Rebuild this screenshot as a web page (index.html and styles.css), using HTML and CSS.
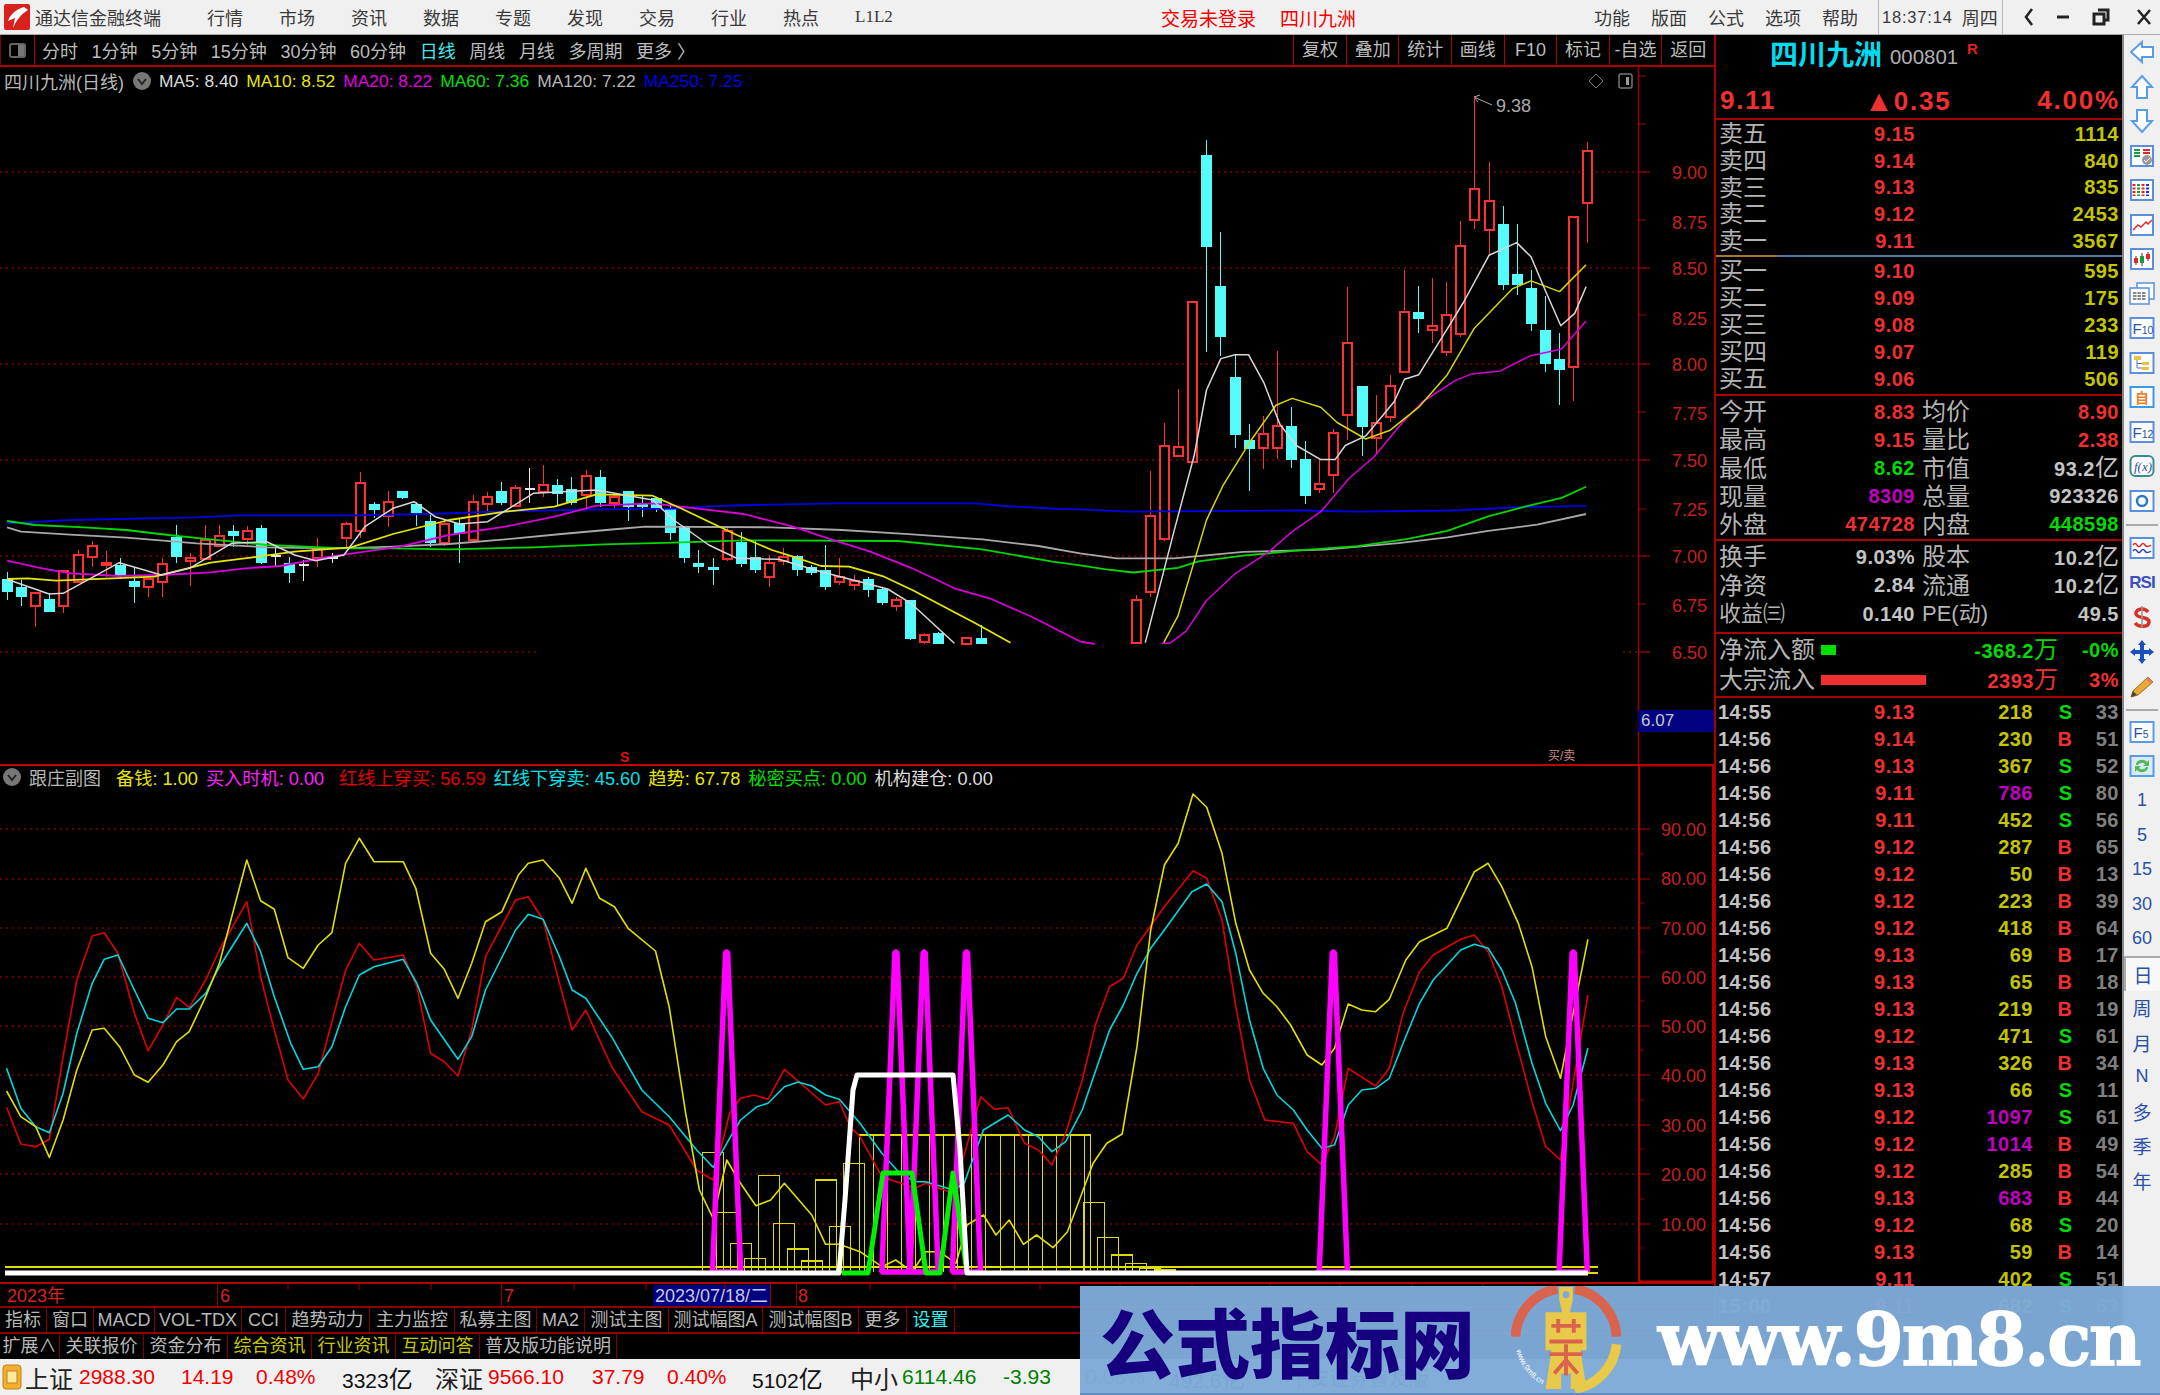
FILE: index.html
```html
<!DOCTYPE html>
<html lang="zh-CN">
<head>
<meta charset="utf-8">
<title>通达信金融终端</title>
<link rel="stylesheet" href="styles.css">
</head>
<body>
<div class="app">
  <header class="titlebar">
    <svg class="logo" viewBox="0 0 26 26"><rect width="26" height="26" rx="2" fill="#d8201c"/><path d="M20 3 C12 5 6 11 4 17 L11 14 L9 24 C12 17 17 10 24 6 Z" fill="#fff"/></svg>
    <span class="appname">通达信金融终端</span>
    <nav class="menu">
      <span>行情</span><span>市场</span><span>资讯</span><span>数据</span><span>专题</span><span>发现</span><span>交易</span><span>行业</span><span>热点</span><span class="l1">L1L2</span>
    </nav>
    <div class="notice"><span>交易未登录</span><span>四川九洲</span></div>
    <nav class="menu2"><span>功能</span><span>版面</span><span>公式</span><span>选项</span><span>帮助</span></nav>
    <div class="clock"><span class="time">18:37:14</span><span>周四</span></div>
    <div class="winctl">
      <svg viewBox="0 0 20 20" class="w1"><path d="M13 2 L7 10 L13 18" fill="none" stroke="#222" stroke-width="2.5"/></svg>
      <svg viewBox="0 0 20 20" class="w2"><path d="M4 10 H16" stroke="#222" stroke-width="3"/></svg>
      <svg viewBox="0 0 20 20" class="w3"><path d="M7 3 H17 V13 H13 M3 7 H13 V17 H3 Z" fill="none" stroke="#222" stroke-width="3"/></svg>
      <svg viewBox="0 0 20 20" class="w4"><path d="M4 3 L16 17 M16 3 L4 17" stroke="#222" stroke-width="2.5"/></svg>
    </div>
  </header>

  <div class="workspace">
    <section class="charts">
      <div class="toolbar">
        <div class="tb-icon"><i></i></div>
        <div class="periods">
          <span>分时</span><span>1分钟</span><span>5分钟</span><span>15分钟</span><span>30分钟</span><span>60分钟</span><span class="on">日线</span><span>周线</span><span>月线</span><span>多周期</span><span>更多 〉</span>
        </div>
        <div class="tools">
          <span>复权</span><span>叠加</span><span>统计</span><span>画线</span><span>F10</span><span>标记</span><span>-自选</span><span>返回</span>
        </div>
      </div>

      <div class="pane pane-main">
        <svg id="mainchart" class="chart" viewBox="0 67 1714 697" width="1714" height="697">
          <g class="axis-text">
            <text x="1672" y="179">9.00</text><text x="1672" y="229">8.75</text><text x="1672" y="275">8.50</text><text x="1672" y="325">8.25</text><text x="1672" y="371">8.00</text><text x="1672" y="420">7.75</text><text x="1672" y="467">7.50</text><text x="1672" y="516">7.25</text><text x="1672" y="563">7.00</text><text x="1672" y="612">6.75</text><text x="1672" y="659">6.50</text>
          </g>
          <text class="hi-label" x="1496" y="112">9.38</text>
          <path d="M1474 97 L1492 105 M1474 97 L1480 95 M1474 97 L1478 102" stroke="#aaa" fill="none"/>
          <path d="M1596 74 L1603 81 L1596 88 L1589 81 Z" fill="none" stroke="#777"/>
          <rect x="1619" y="74" width="13" height="14" rx="2" fill="none" stroke="#777" stroke-width="1.5"/><rect x="1626" y="77" width="3" height="8" fill="#999"/>
          <text class="sig" x="620" y="762">S</text>
          <text class="sig2" x="1548" y="760">买/卖</text>
        </svg>
        <div class="legend">
          <span class="l-name">四川九洲(日线)</span>
          <svg class="chev" viewBox="0 0 18 18"><circle cx="9" cy="9" r="9" fill="#777"/><path d="M5 7 L9 12 L13 7" fill="none" stroke="#222" stroke-width="2"/></svg>
          <span class="c-w">MA5: 8.40</span><span class="c-y">MA10: 8.52</span><span class="c-m">MA20: 8.22</span><span class="c-g">MA60: 7.36</span><span class="c-l">MA120: 7.22</span><span class="c-b">MA250: 7.25</span>
        </div>
        <div class="curprice">6.07</div>
      </div>

      <div class="pane pane-sub">
        <svg id="subchart" class="chart" viewBox="0 764 1714 518" width="1714" height="518">
          <path d="M0 765 H1714" stroke="#c40000" stroke-width="2"/>
          <rect x="1639" y="765.5" width="74" height="516" fill="none" stroke="#b80000" stroke-width="2"/>
          <g class="axis-text">
            <text x="1661" y="836">90.00</text><text x="1661" y="885">80.00</text><text x="1661" y="935">70.00</text><text x="1661" y="984">60.00</text><text x="1661" y="1033">50.00</text><text x="1661" y="1082">40.00</text><text x="1661" y="1132">30.00</text><text x="1661" y="1181">20.00</text><text x="1661" y="1231">10.00</text>
          </g>
        </svg>
        <div class="legend legend-sub">
          <svg class="chev" viewBox="0 0 18 18"><circle cx="9" cy="9" r="9" fill="#777"/><path d="M5 7 L9 12 L13 7" fill="none" stroke="#222" stroke-width="2"/></svg>
          <span class="l-name">跟庄副图</span>
          <span class="c-y">备钱: 1.00</span><span class="c-m2">买入时机: 0.00</span><span class="c-r">红线上穿买: 56.59</span><span class="c-c">红线下穿卖: 45.60</span><span class="c-y">趋势: 67.78</span><span class="c-g">秘密买点: 0.00</span><span class="c-w">机构建仓: 0.00</span>
        </div>
      </div>

      <svg class="dates" viewBox="0 1282 1714 24" width="1714" height="24">
        <rect x="653" y="1285" width="117" height="21" fill="#000080"/>
        <path d="M0 1283 H1714" stroke="#b80000" stroke-width="2"/>
        <path d="M217.500 1284 V1306 M501.500 1284 V1306 M796.500 1284 V1306 M770.500 1284 V1306 M288 1284 V1290 M359 1284 V1290 M431 1284 V1290 M574 1284 V1290 M646 1284 V1290 M725 1284 V1290 M870 1284 V1290 M955 1284 V1290 M1040 1284 V1290 M1120 1284 V1290 M1192 1284 V1290 M1270 1284 V1290 M1340 1284 V1290 M1412 1284 V1290 M1483 1284 V1290 M1555 1284 V1290" stroke="#900000"/>
        <text class="d-red" x="7" y="1302">2023年</text>
        <text class="d-red" x="220" y="1302">6</text>
        <text class="d-red" x="504" y="1302">7</text>
        <text class="d-cur" x="655" y="1302">2023/07/18/二</text>
        <text class="d-red" x="798" y="1302">8</text>
      </svg>

      <div class="btnrow r2">
        <span>指标</span><span>窗口</span><span>MACD</span><span>VOL-TDX</span><span>CCI</span><span>趋势动力</span><span>主力监控</span><span>私募主图</span><span>MA2</span><span>测试主图</span><span>测试幅图A</span><span>测试幅图B</span><span>更多</span><span class="cy">设置</span>
      </div>
      <div class="btnrow r3">
        <span>扩展∧</span><span>关联报价</span><span>资金分布</span><span class="ye">综合资讯</span><span class="ye">行业资讯</span><span class="ye">互动问答</span><span>普及版功能说明</span>
      </div>
    </section>

    <aside class="quote">
      <div class="q-name"><b>四川九洲</b><span class="code">000801</span><sup>R</sup></div>
      <div class="q-price"><span>9.11</span><span class="chg"><i>▲</i>0.35</span><span class="pct">4.00%</span></div>

      <div class="book sells">
        <div class="brow"><label>卖五</label><em class="up">9.15</em><em class="vol">1114</em></div>
        <div class="brow"><label>卖四</label><em class="up">9.14</em><em class="vol">840</em></div>
        <div class="brow"><label>卖三</label><em class="up">9.13</em><em class="vol">835</em></div>
        <div class="brow"><label>卖二</label><em class="up">9.12</em><em class="vol">2453</em></div>
        <div class="brow"><label>卖一</label><em class="up">9.11</em><em class="vol">3567</em></div>
      </div>
      <div class="book buys">
        <div class="brow"><label>买一</label><em class="up">9.10</em><em class="vol">595</em></div>
        <div class="brow"><label>买二</label><em class="up">9.09</em><em class="vol">175</em></div>
        <div class="brow"><label>买三</label><em class="up">9.08</em><em class="vol">233</em></div>
        <div class="brow"><label>买四</label><em class="up">9.07</em><em class="vol">119</em></div>
        <div class="brow"><label>买五</label><em class="up">9.06</em><em class="vol">506</em></div>
      </div>

      <div class="stats s1">
        <div class="srow"><label>今开</label><em class="up">8.83</em><label>均价</label><em class="up">8.90</em></div>
        <div class="srow"><label>最高</label><em class="up">9.15</em><label>量比</label><em class="up">2.38</em></div>
        <div class="srow"><label>最低</label><em class="dn">8.62</em><label>市值</label><em class="gy">93.2<u>亿</u></em></div>
        <div class="srow"><label>现量</label><em class="pu">8309</em><label>总量</label><em class="gy">923326</em></div>
        <div class="srow"><label>外盘</label><em class="up">474728</em><label>内盘</label><em class="dn">448598</em></div>
      </div>
      <div class="stats s2">
        <div class="srow"><label>换手</label><em class="gy">9.03%</em><label>股本</label><em class="gy">10.2<u>亿</u></em></div>
        <div class="srow"><label>净资</label><em class="gy">2.84</em><label>流通</label><em class="gy">10.2<u>亿</u></em></div>
        <div class="srow"><label class="sm">收益㈢</label><em class="gy">0.140</em><label class="sm">PE(动)</label><em class="gy">49.5</em></div>
      </div>

      <div class="flows">
        <div class="frow"><label>净流入额</label><div class="fbar"><i class="b-g"></i></div><em class="dn">-368.2<u>万</u></em><em class="dn">-0%</em></div>
        <div class="frow"><label>大宗流入</label><div class="fbar"><i class="b-r"></i></div><em class="up">2393<u>万</u></em><em class="up">3%</em></div>
      </div>

      <div class="ticks">
        <div class="trow"><b>14:55</b><em class="up">9.13</em><em class="vol">218</em><i class="dn">S</i><s>33</s></div>
        <div class="trow"><b>14:56</b><em class="up">9.14</em><em class="vol">230</em><i class="up">B</i><s>51</s></div>
        <div class="trow"><b>14:56</b><em class="up">9.13</em><em class="vol">367</em><i class="dn">S</i><s>52</s></div>
        <div class="trow"><b>14:56</b><em class="up">9.11</em><em class="pu">786</em><i class="dn">S</i><s>80</s></div>
        <div class="trow"><b>14:56</b><em class="up">9.11</em><em class="vol">452</em><i class="dn">S</i><s>56</s></div>
        <div class="trow"><b>14:56</b><em class="up">9.12</em><em class="vol">287</em><i class="up">B</i><s>65</s></div>
        <div class="trow"><b>14:56</b><em class="up">9.12</em><em class="vol">50</em><i class="up">B</i><s>13</s></div>
        <div class="trow"><b>14:56</b><em class="up">9.12</em><em class="vol">223</em><i class="up">B</i><s>39</s></div>
        <div class="trow"><b>14:56</b><em class="up">9.12</em><em class="vol">418</em><i class="up">B</i><s>64</s></div>
        <div class="trow"><b>14:56</b><em class="up">9.13</em><em class="vol">69</em><i class="up">B</i><s>17</s></div>
        <div class="trow"><b>14:56</b><em class="up">9.13</em><em class="vol">65</em><i class="up">B</i><s>18</s></div>
        <div class="trow"><b>14:56</b><em class="up">9.13</em><em class="vol">219</em><i class="up">B</i><s>19</s></div>
        <div class="trow"><b>14:56</b><em class="up">9.12</em><em class="vol">471</em><i class="dn">S</i><s>61</s></div>
        <div class="trow"><b>14:56</b><em class="up">9.13</em><em class="vol">326</em><i class="up">B</i><s>34</s></div>
        <div class="trow"><b>14:56</b><em class="up">9.13</em><em class="vol">66</em><i class="dn">S</i><s>11</s></div>
        <div class="trow"><b>14:56</b><em class="up">9.12</em><em class="pu">1097</em><i class="dn">S</i><s>61</s></div>
        <div class="trow"><b>14:56</b><em class="up">9.12</em><em class="pu">1014</em><i class="up">B</i><s>49</s></div>
        <div class="trow"><b>14:56</b><em class="up">9.12</em><em class="vol">285</em><i class="up">B</i><s>54</s></div>
        <div class="trow"><b>14:56</b><em class="up">9.13</em><em class="pu">683</em><i class="up">B</i><s>44</s></div>
        <div class="trow"><b>14:56</b><em class="up">9.12</em><em class="vol">68</em><i class="dn">S</i><s>20</s></div>
        <div class="trow"><b>14:56</b><em class="up">9.13</em><em class="vol">59</em><i class="up">B</i><s>14</s></div>
        <div class="trow"><b>14:57</b><em class="up">9.11</em><em class="vol">402</em><i class="dn">S</i><s>51</s></div>
        <div class="trow"><b>15:00</b><em class="up">9.11</em><em class="vol">682</em><i class="dn">S</i><s>63</s></div>
      </div>
    </aside>

    <aside class="sidebar">
      <div class="si"><svg viewBox="0 0 26 26"><path d="M2 13 L13 3 V8 H24 V18 H13 V23 Z" fill="#fff" stroke="#5a9be8" stroke-width="2"/></svg></div>
      <div class="si"><svg viewBox="0 0 26 26"><path d="M13 2 L23 13 H18 V24 H8 V13 H3 Z" fill="#fff" stroke="#5a9be8" stroke-width="2"/></svg></div>
      <div class="si"><svg viewBox="0 0 26 26"><path d="M13 24 L23 13 H18 V2 H8 V13 H3 Z" fill="#fff" stroke="#5a9be8" stroke-width="2"/></svg></div>
      <div class="si"><svg viewBox="0 0 26 26"><rect x="2" y="3" width="22" height="20" fill="#fff" stroke="#5a8fe0" stroke-width="2"/><path d="M5 7 H11 M5 10 H11 M5 13 H11" stroke="#1a9a3a" stroke-width="2"/><path d="M14 7 H21 M14 10 H21" stroke="#e02828" stroke-width="2"/><circle cx="18" cy="17" r="5" fill="#999"/><path d="M15 17 L17 19 L21 15" stroke="#fff" fill="none"/></svg></div>
      <div class="si"><svg viewBox="0 0 26 26"><rect x="2" y="3" width="22" height="20" fill="#fff" stroke="#5a8fe0" stroke-width="2"/><path d="M5 7 V19" stroke="#e02828" stroke-width="3" stroke-dasharray="2 1.500"/><path d="M9.500 7 V19" stroke="#1a9a3a" stroke-width="3" stroke-dasharray="2 1.500"/><path d="M14 7 V19" stroke="#e02828" stroke-width="3" stroke-dasharray="2 1.500"/><path d="M18.500 7 V19" stroke="#2030d0" stroke-width="3" stroke-dasharray="2 1.500"/></svg></div>
      <div class="si"><svg viewBox="0 0 26 26"><rect x="2" y="3" width="22" height="20" fill="#fff" stroke="#5a8fe0" stroke-width="2"/><path d="M4 18 L9 13 L12 15 L17 10 L19 12 L23 8" fill="none" stroke="#e02828" stroke-width="1.500"/></svg></div>
      <div class="si"><svg viewBox="0 0 26 26"><rect x="2" y="3" width="22" height="20" fill="#fff" stroke="#5a8fe0" stroke-width="2"/><path d="M7 10 V19 M13 7 V20 M19 6 V15" stroke="#333"/><rect x="5" y="12" width="4" height="5" fill="#e02828"/><rect x="11" y="10" width="4" height="7" fill="#1a9a3a"/><rect x="17" y="8" width="4" height="5" fill="#e02828"/></svg></div>
      <div class="si"><svg viewBox="0 0 26 26"><rect x="8" y="2" width="17" height="16" fill="#fff" stroke="#5a8fe0" stroke-width="1.500"/><rect x="1" y="7" width="19" height="16" fill="#fff" stroke="#5a8fe0" stroke-width="1.500"/><path d="M4 12 H17 M4 15 H17 M4 18 H17" stroke="#888" stroke-width="2" stroke-dasharray="3.500 1"/></svg></div>
      <div class="si"><svg viewBox="0 0 26 26"><rect x="1.500" y="3" width="23" height="20" fill="#fff" stroke="#5a8fe0" stroke-width="2"/><text class="ict" x="3.500" y="18.500">F<tspan class="icn">10</tspan></text></svg></div>
      <div class="si"><svg viewBox="0 0 26 26"><rect x="1.500" y="3" width="23" height="20" fill="#fff" stroke="#5a8fe0" stroke-width="2"/><rect x="5" y="6" width="7" height="4" fill="#f0c040"/><rect x="13" y="12" width="7" height="3" fill="#f0c040"/><rect x="13" y="17" width="7" height="3" fill="#f0c040"/><path d="M8 10 V18 H13 M8 13.500 H13" fill="none" stroke="#4a78c0"/></svg></div>
      <div class="si"><svg viewBox="0 0 26 26"><rect x="1.500" y="3" width="23" height="20" fill="#fff" stroke="#3a9ae8" stroke-width="2"/><text class="icj" x="6" y="19">自</text></svg></div>
      <div class="si"><svg viewBox="0 0 26 26"><rect x="1.500" y="3" width="23" height="20" fill="#fff" stroke="#5a8fe0" stroke-width="2"/><text class="ict" x="3.500" y="18.500">F<tspan class="icn">12</tspan></text></svg></div>
      <div class="si"><svg viewBox="0 0 26 26"><rect x="1.500" y="3" width="23" height="20" rx="5" fill="#fff" stroke="#3a8a90" stroke-width="2"/><text class="icf" x="5" y="18">f(x)</text></svg></div>
      <div class="si"><svg viewBox="0 0 26 26"><rect x="1.500" y="3" width="23" height="20" fill="#fff" stroke="#5a8fe0" stroke-width="2"/><circle cx="13" cy="13" r="5" fill="none" stroke="#2a78d0" stroke-width="2.500"/></svg></div>
      <div class="sep s-a"></div>
      <div class="si"><svg viewBox="0 0 26 26"><rect x="1.500" y="3" width="23" height="20" fill="#fff" stroke="#5a8fe0" stroke-width="2"/><path d="M4 10 Q6 7 8 10 T12 10 T16 10 T22 10" fill="none" stroke="#e02828" stroke-width="1.500"/><path d="M4 16 Q6 13 8 16 T12 16 T16 16 T22 16" fill="none" stroke="#3040d0" stroke-width="1.500"/></svg></div>
      <div class="si st rsi">RSI</div>
      <div class="si"><svg viewBox="0 0 26 26"><path d="M19 8 C15 3 6 5 7 10 C8 15 20 12 20 18 C20 23 10 24 6 19" fill="none" stroke="#d83028" stroke-width="3.500"/><path d="M13 2 V24" stroke="#999" stroke-width="1.500"/></svg></div>
      <div class="si"><svg viewBox="0 0 26 26"><path d="M13 1 L17 6 H15 V11 H20 V9 L25 13 L20 17 V15 H15 V20 H17 L13 25 L9 20 H11 V15 H6 V17 L1 13 L6 9 V11 H11 V6 H9 Z" fill="#1a4fc0"/></svg></div>
      <div class="si"><svg viewBox="0 0 26 26"><path d="M2 24 L4 18 L19 4 L24 9 L9 22 Z" fill="#e8a838" stroke="#a07020"/><path d="M19 4 L24 9 L22 11 L17 6 Z" fill="#e87868"/><path d="M2 24 L4 18 L8 22 Z" fill="#444"/></svg></div>
      <div class="sep s-b"></div>
      <div class="si"><svg viewBox="0 0 26 26"><rect x="1.500" y="3" width="23" height="20" fill="#fff" stroke="#5a9be8" stroke-width="2"/><text class="ict" x="4.500" y="18.500">F<tspan class="icn">5</tspan></text></svg></div>
      <div class="si"><svg viewBox="0 0 26 26"><rect x="1.500" y="3" width="23" height="20" fill="#d8ecf8" stroke="#5a9be8" stroke-width="2"/><path d="M7 12 A6 5 0 0 1 18 9 L20 7 V13 H14 L16 11 A4 3 0 0 0 9 12 Z M19 14 A6 5 0 0 1 8 17 L6 19 V13 H12 L10 15 A4 3 0 0 0 17 14 Z" fill="#58b858"/></svg></div>
      <div class="si st">1</div>
      <div class="si st">5</div>
      <div class="si st">15</div>
      <div class="si st">30</div>
      <div class="si st">60</div>
      <div class="si st cj pressed">日</div>
      <div class="si st cj">周</div>
      <div class="si st cj">月</div>
      <div class="si st">N</div>
      <div class="si st cj">多</div>
      <div class="si st cj">季</div>
      <div class="si st cj">年</div>
    </aside>
  </div>

  <footer class="status">
    <svg class="st-ic" viewBox="0 0 20 26"><rect x="1" y="1" width="18" height="24" rx="3" fill="#f0b030" stroke="#c88010"/><rect x="5" y="7" width="10" height="12" fill="#ffe9a0" stroke="#c88010"/></svg>
    <span class="cn">上证</span><span class="r">2988.30</span><span class="r">14.19</span><span class="r">0.48%</span><span class="k">3323<u>亿</u></span>
    <span class="cn">深证</span><span class="r">9566.10</span><span class="r">37.79</span><span class="r">0.40%</span><span class="k">5102<u>亿</u></span>
    <span class="cn">中小</span><span class="g">6114.46</span><span class="g">-3.93</span><span class="g">0.06%</span><span class="k">492.6<u>亿</u></span><span class="k broker">平安证券普及版</span>
  </footer>

  <div class="watermark">
    <span class="wm-cn">公式指标网</span>
    <svg class="wm-logo" viewBox="0 0 110 110">
      <defs><path id="arcL" d="M4 66 A52 52 0 0 0 44 106"/></defs>
      <path d="M3 52 A52 52 0 0 1 46 3 M64 3 A52 52 0 0 1 107 52" fill="none" stroke="#d9634c" stroke-width="10"/>
      <path d="M107 60 A52 52 0 0 1 64 106" fill="none" stroke="#e8c94a" stroke-width="10"/>
      <path d="M48 1 H62 V14 L59 27 H76 V66 H70 L76 106 H60 V90 H50 V106 H34 L40 66 H34 V27 H51 L48 14 Z" fill="#e8c94a"/>
      <circle cx="55" cy="9" r="3.500" fill="#7fa9d6"/>
      <path d="M40 41 H70 M47 34 V48 M63 34 V48 M38 57 H72 M38 70 H72 M55 60 V92 M43 90 L55 76 L67 90" fill="none" stroke="#d9634c" stroke-width="4"/>
      <text class="wm-arc"><textPath href="#arcL">www.9m8.cn</textPath></text>
    </svg>
    <span class="wm-url">www.9m8.cn</span>
  </div>
</div>
<script src="script.js"></script>
</body>
</html>
```
FILE: styles.css
```css
*{box-sizing:border-box}
html,body{margin:0;padding:0;background:#000}
body{width:2160px;height:1395px;overflow:hidden;font-family:"Liberation Sans","Noto Sans CJK SC",sans-serif}
em,i,b,s,u{font-style:normal;text-decoration:none}
.app{position:relative;width:2160px;height:1395px;display:flex;flex-direction:column;overflow:hidden}

.titlebar{height:35px;flex:none;background:#f0f0f0;border-bottom:1px solid #a8a8a8;display:flex;align-items:center;font-size:18px;color:#3a3a3a}
.logo{width:26px;height:26px;margin-left:4px;flex:none}
.appname{margin-left:5px}
.menu{display:flex;gap:36px;margin-left:46px;align-items:center}
.l1{font-family:"Liberation Serif",serif;font-size:17px;width:35px}
.notice{display:flex;gap:24px;margin-left:271px;color:#f00000;font-size:19px}
.menu2{display:flex;gap:21px;margin-left:238px}
.clock{display:flex;align-items:center;gap:9px;margin-left:20px;height:34px;padding:0 3px;border-left:1px solid #b8b8b8;border-right:1px solid #b8b8b8;width:125px}
.time{font-size:16.500px;letter-spacing:.8px;white-space:nowrap}
.winctl{position:relative;flex:1;height:34px}
.winctl svg{position:absolute;top:7px;width:20px;height:20px}
.w1{left:16px}.w2{left:50px}.w3{left:88px}.w4{left:131px}

.workspace{height:1324px;flex:none;display:flex;background:#000}
.charts{width:1714px;flex:none;display:flex;flex-direction:column}

.toolbar{height:32px;flex:none;display:flex;align-items:center;border-bottom:2px solid #a80000;color:#bcbcbc;font-size:18px}
.tb-icon{width:35px;height:30px;border-left:1px solid #800000;border-right:1px solid #a80000;display:flex;align-items:center;justify-content:center}
.tb-icon i{width:17px;height:15px;border:2px solid #666;border-radius:3px;background:linear-gradient(90deg,#000 0 55%,#777 55%)}
.periods{display:flex;gap:13.600px;margin-left:7px;white-space:nowrap}
.periods .on{color:#44e8f0}
.tools{display:flex;margin-left:auto;height:30px}
.tools span{width:52.600px;text-align:center;border-left:1px solid #a80000;line-height:30px;white-space:nowrap}

.pane{position:relative;flex:none}
.pane-main{height:697px}
.pane-sub{height:518px}
.chart{display:block;overflow:visible}
.axis-text text{font-size:18px;fill:#c42020}
.hi-label{font-size:18px;fill:#aaa}
.sig{font-size:14px;font-weight:700;fill:#e01010}
.sig2{font-size:12px;fill:#c88}

.legend{position:absolute;left:4px;top:4px;display:flex;align-items:center;height:20px;font-size:17.400px;white-space:nowrap;gap:8px}
.l-name{color:#b8b8b8;font-size:18px}
.legend .chev{width:18px;height:18px;margin-left:1px;margin-right:0}
.legend-sub{left:3px;top:3px;gap:8px;font-size:18.200px}
.legend-sub .chev{margin:0}
.legend-sub .l-name{margin-right:7px}
.legend-sub .c-m2{margin-right:7px}
.c-w{color:#dcdcdc}.c-y{color:#e6e600}.c-m{color:#e000e0}.c-m2{color:#ff20ff}.c-g{color:#00e000}.c-l{color:#b8b8b8}.c-b{color:#0000e8}.c-r{color:#e00000}.c-c{color:#00e0e8}
.curprice{position:absolute;left:1638px;top:643px;width:76px;height:22px;background:#000080;color:#c8c8c8;font-size:17px;line-height:22px;padding-left:3px}

.dates{display:block;flex:none}
.d-red{font-size:18px;fill:#d82020}
.d-cur{font-size:18px;fill:#c8c8e8}

.btnrow{display:flex;flex:none;color:#b8b8b8;font-size:18px;white-space:nowrap;border-top:2px solid #900000}
.btnrow span{border-right:1px solid #800000;padding:0 5px;text-align:center}
.r2{height:26px;line-height:24px}
.r3{height:27px;line-height:25px}
.r2 span:nth-child(1),.r2 span:nth-child(2){width:47px;padding:0}
.r2 span:nth-child(3){width:61px;padding:0}
.r2 span:nth-child(4){width:87px;padding:0}
.r2 span:nth-child(5){width:44px;padding:0}
.r2 span:nth-child(6){width:84px;padding:0}
.r2 span:nth-child(7){width:85px;padding:0}
.r2 span:nth-child(8){width:82px;padding:0}
.r2 span:nth-child(9){width:48px;padding:0}
.r2 span:nth-child(10){width:84px;padding:0}
.r2 span:nth-child(11){width:94px;padding:0}
.r2 span:nth-child(12){width:96px;padding:0}
.r2 span:nth-child(13){width:48px;padding:0}
.r2 span:nth-child(14){width:48px;padding:0}
.r3 span{width:84px;padding:0}
.r3 span:nth-child(1){width:60px}
.r3 span:nth-child(7){width:137px}
.cy{color:#30f0f0}
.ye{color:#c8c800}

.quote{width:408px;flex:none;border-left:2px solid #a80000;overflow:hidden;color:#b4b4b4;font-size:24px}
.quote label{font-weight:400;line-height:1}
.quote em,.ticks b{font-size:20px;font-weight:700;letter-spacing:.5px}
.quote u{font-size:24px;font-weight:400;letter-spacing:0;line-height:1}
.up{color:#f03030}.dn{color:#00dc00}.gy{color:#c4c4c4}.pu{color:#c000c0}.vol{color:#c4c400}

.q-name{height:47px;display:flex;align-items:flex-start;padding:5px 0 0 54px}
.q-name b{font-size:28px;font-weight:700;color:#00dcf0;line-height:32px}
.code{font-size:20.400px;color:#b0b0b0;margin:6px 0 0 8px}
.q-name sup{font-size:15px;color:#e02020;font-weight:700;margin:1px 0 0 9px;line-height:1}
.q-price{height:38px;display:grid;grid-template-columns:144px 1fr auto;border-bottom:2px solid #a80000;color:#f03030;font-size:26px;font-weight:700;letter-spacing:1.800px;padding:2px 2px 0 4px;line-height:32px}
.chg{display:flex;align-items:center}
.chg i{font-size:30px;line-height:30px;letter-spacing:0}

.book{display:flex;flex-direction:column}
.sells{height:137px;padding-top:1px;border-bottom:2px solid transparent;border-image:linear-gradient(90deg,#a87830 0 62px,#4a7aa8 62px) 1}
.buys{height:139px;padding-top:1px;border-bottom:2px solid #a80000}
.brow{height:27px;display:grid;grid-template-columns:196px 204px;position:relative;align-items:center;padding-left:3px}
.brow label{position:absolute;left:3px;top:1px}
.brow em{text-align:right;grid-column:1}
.brow em.vol{grid-column:2;grid-row:1}

.stats{display:flex;flex-direction:column}
.s1{height:145px;padding-top:2px;border-bottom:2px solid #a80000}
.s2{height:93px;padding-top:2px;border-bottom:2px solid #a80000}
.srow{height:28.500px;display:grid;align-items:center;padding:0 3px;grid-template-columns:50px 146px 58px 146px}
.srow label{white-space:nowrap}
.srow label:nth-of-type(2){padding-left:7px}
.srow em{text-align:right;white-space:nowrap}
.srow .sm{font-size:22px;width:0}

.flows{height:64px;padding-top:1px;border-bottom:2px solid #a80000}
.frow{height:30px;display:grid;grid-template-columns:102px 137px 100px 61px;align-items:center;padding-left:3px}
.frow em{text-align:right;white-space:nowrap}
.fbar{height:10px;display:block}
.fbar i{display:block;height:10px}
.b-g{width:15px;background:#00e000}
.b-r{width:105px;background:#f03030}

.ticks{padding-top:1px}
.trow{height:27px;display:grid;grid-template-columns:60px 137px 118px 39px 47px;align-items:center;padding-left:2px;line-height:27px}
.trow b{color:#c4c4c4}
.trow em{text-align:right}
.trow i{font-size:20px;font-weight:700;text-align:right}
.trow s{font-size:20px;font-weight:700;letter-spacing:.5px;color:#808080;text-align:right;text-decoration:none}

.sidebar{width:38px;flex:none;background:#f0f0f0;border-left:2px solid #888;display:flex;flex-direction:column;color:#2a50a8}
.si{height:34.500px;flex:none;display:flex;align-items:center;justify-content:center}
.si svg{width:26px;height:26px;display:block}
.st{font-size:18px}
.cj{font-size:19px}
.rsi{font-weight:700;font-size:17px;color:#3a50c0;letter-spacing:-1px}
.pressed{background:#f8f8f8;border-top:2px solid #aaa;border-left:2px solid #aaa}
.sep{flex:none;border-top:2px solid #aaa}
.s-a{margin:6px 2px 0;height:7px}
.s-b{height:6px;margin:5px 2px 0}
.ict{font-size:15px;fill:#2a50b0}
.icn{font-size:10.500px}
.icj{font-size:14px;fill:#f08030;font-weight:700}
.icf{font-size:13px;fill:#2a50a0;font-style:italic;font-family:"Liberation Serif",serif}

.status{flex:1;background:#f0f0f0;display:grid;align-items:center;grid-template-columns:25px 54px 102px 75px 86px 93px 53px 104px 75px 85px 98px 52px 101px 82px 84px 120px 1fr;font-size:21px;white-space:nowrap}
.st-ic{width:20px;height:26px;margin-left:2px}
.status .cn{font-size:24px;color:#222}
.status .r{color:#f00000}
.status .g{color:#008000}
.status .k{color:#111}
.status u{font-size:24px}
.broker{font-size:20px}

.watermark{position:absolute;left:1080px;top:1286px;width:1080px;height:109px;background:rgba(127,170,216,.97);border-bottom:2px solid #5f8ebf;display:flex;align-items:center}
.wm-cn{font-family:"Noto Sans CJK SC",sans-serif;font-weight:900;font-size:75px;line-height:1;color:#16007f;margin-left:20px;width:378px;white-space:nowrap}
.wm-logo{width:110px;height:107px;margin-left:33px;flex:none}
.wm-url{font-family:"DejaVu Serif",serif;font-weight:700;font-size:72px;line-height:1;color:#fff;margin-left:37px;white-space:nowrap;letter-spacing:-2px;-webkit-text-stroke:1.500px #fff}
.wm-arc{font-size:8px;fill:#fff;font-family:"Liberation Sans",sans-serif}
```
FILE: script.js
```js
(function(){
var NS='http://www.w3.org/2000/svg';
function el(p,n,a){var e=document.createElementNS(NS,n);for(var k in a)e.setAttribute(k,a[k]);p.appendChild(e);return e}
function z7(a){return a.map(function(p){return[p[0]/1.425,440+p[1]/3]})}
function z8(a){return a.map(function(p){return[1080+p[0]/2.45,80+p[1]/2.613]})}
function z9(a){return a.map(function(p){return[p[0]/1.823,780+p[1]/3]})}
function z10(a){return a.map(function(p){return[860+p[0]/1.823,780+p[1]/3]})}
function line(p,pts,c,w,extra){var a={points:pts.map(function(q){return q[0].toFixed(1)+','+q[1].toFixed(1)}).join(' '),fill:'none',stroke:c,'stroke-width':w,'stroke-linejoin':'round'};for(var k in extra)a[k]=extra[k];return el(p,'polyline',a)}
var STEP=14.11;function cx(i){return 7+STEP*i}
var DOT='#c00000';

/* ---------- main chart ---------- */
var m=document.getElementById('mainchart');
var g=el(m,'g',{});
el(g,'path',{d:'M1638.500 67 V764',stroke:'#a00000','stroke-width':1.5});
[172,268,364,460,556].forEach(function(y){el(g,'path',{d:'M0 '+y+' H1650',stroke:DOT,'stroke-dasharray':'2 4'})});
el(g,'path',{d:'M0 652 H537 M1623 652 H1650',stroke:DOT,'stroke-dasharray':'2 4'});
[220,315,412,509,604,124,76].forEach(function(y){el(g,'path',{d:'M1639 '+y+' H1646',stroke:'#9a0000'})});
[172,268,364,460,556,652].forEach(function(y){el(g,'path',{d:'M1639 '+y+' H1650',stroke:'#b00000'})});

var A=[['c',395,418,455,480],['c',420,440,472,498],['r',458,458,498,562],['c',460,476,517,517],['r',390,392,498,520],['r',330,346,425,430],['r',302,318,352,382],['r',332,368,376,410],['c',355,376,408,415],['c',380,422,440,490],['r',405,418,440,472],['r',355,373,426,472],['c',255,290,350,368],['r',340,355,363,437],['r',255,300,358,360],['r',255,288,318,322],['c',255,272,288,320],['r',258,273,297,315],['c',255,265,368,372],['w',320,345,349,378],['c',352,368,400,430],['w',360,372,376,422],['r',295,327,354,380],['w',340,350,352,370],['r',245,252,295,320],['r',95,130,272,295],['c',185,192,210,235],['r',152,185,228,262],['c',152,152,175,178],['c',185,192,220,258],['c',225,242,310,320],['r',240,252,310,318],['c',235,250,283,368],['r',165,185,300,302],['r',155,172,192,218],['c',125,152,188,195],['r',135,145,198,200],['w',85,144,147,190],['r',75,135,155,170],['c',118,134,163,198],['c',110,148,190,195],['r',90,108,165,210],['c',90,112,188,200],['r',158,172,190,205],['c',152,152,202,242],['c',165,188,200,230],['c',170,175,205,215],['c',190,205,278,300],['c',258,258,355,370],['c',330,368,382,400],['c',355,382,390,435],['r',265,273,358,362],['c',275,305,372,382],['c',300,350,390,400],['r',345,370,412,440],['r',325,350,362,375],['c',345,347,390,408],['c',375,380,400,405],['c',315,390,440,450],['r',355,412,426,435],['r',405,422,436,450],['c',410,418,450,470],['c',445,447,490,495],['r',470,480,497,512],['c',480,480,597,600],['r',578,586,606,612],['c',577,580,612,612],['c',612,612,612,612],['r',590,594,612,612],['c',555,593,612,612],['c',562,612,612,612]];
var B=[['r',1345,1360,1471,1471],['r',1022,1140,1338,1352],['r',897,957,1200,1205],['r',807,960,982,982],['r',580,580,997,997],['c',158,195,437,712],['c',398,537,672,720],['c',715,776,928,962],['c',900,940,963,1073],['r',878,926,962,1017],['r',708,903,962,990],['c',855,905,994,1013],['c',943,990,1088,1108],['r',990,1055,1068,1080],['r',912,922,1032,1080],['r',540,686,875,940],['c',800,800,907,983],['r',822,895,935,978],['r',772,800,880,893],['r',497,607,762,762],['c',537,607,625,660],['r',517,643,652,688],['r',528,615,710,722],['r',368,435,664,672],['r',45,286,365,390],['r',215,317,393,460],['c',328,375,536,548],['c',375,508,536,563],['c',497,544,637,657],['c',565,654,743,763],['c',662,729,758,850],['r',357,357,750,840],['r',163,185,322,425]];
function candle(i,d,f){
  var x=Math.round(cx(i))+.5,t=d[0],wt=f(d[1]),bt=f(d[2]),bb=f(d[3]),wb=f(d[4]);
  var c=t==='c'?'#54fcfc':(t==='r'?'#ff3030':'#e8e8e8');
  var cg=el(g,'g',{'shape-rendering':'crispEdges'});
  el(cg,'path',{d:'M'+x+' '+wt+' V'+wb,stroke:c,'stroke-width':t==='w'?1:1.5});
  if(t==='c')el(cg,'rect',{x:x-5.5,y:bt,width:11,height:Math.max(bb-bt,1),fill:c});
  else if(t==='r')el(cg,'rect',{x:x-4.5,y:bt,width:9,height:Math.max(bb-bt,2),fill:'#000',stroke:c,'stroke-width':2});
  else el(cg,'rect',{x:x-5,y:bt,width:10,height:2,fill:c});
}
A.forEach(function(d,i){if(d[2]<612)candle(i,d,function(v){return 440+v/3})});
B.forEach(function(d,i){candle(80+i,d,function(v){return 80+v/2.613})});

function ma(ptsA,ptsB,c,w){var a=z7(ptsA).filter(function(q){return q[0]<1080});line(g,a.concat(z8(ptsB)),c,w)}
ma([[10,250],[100,240],[280,232],[340,226],[510,226],[610,222],[720,214],[860,208],[960,206],[1010,199],[1070,195],[1190,190],[1390,190],[1430,198],[1510,207]],[[0,1122],[120,1128],[540,1125],[680,1128],[910,1125],[1080,1116],[1240,1113]],'#0000e8',1.8);
ma([[10,262],[30,275],[100,284],[180,293],[280,310],[380,322],[480,325],[560,320],[640,312],[720,298],[800,282],[880,267],[920,260],[1100,262],[1200,270],[1300,283],[1400,298],[1480,318]],[[0,1237],[90,1250],[230,1250],[400,1233],[600,1227],[780,1210],[900,1195],[1000,1178],[1120,1162],[1240,1134]],'#a8a8a8',1.8);
ma([[10,243],[50,255],[120,262],[180,270],[240,285],[300,298],[380,315],[490,325],[560,325],[640,328],[760,322],[860,313],[960,308],[1060,301],[1280,303],[1400,328],[1500,365]],[[0,1268],[60,1278],[130,1287],[240,1275],[290,1258],[400,1243],[530,1230],[680,1218],[800,1200],[900,1178],[1000,1140],[1090,1115],[1180,1092],[1240,1063]],'#00d800',1.8);
line(g,z7([[10,362],[60,385],[100,400],[170,408],[230,405],[300,397],[350,385],[400,378],[470,350],[570,320],[640,285],[720,260],[790,230],[850,197],[930,190],[1060,222],[1130,260],[1180,295],[1240,335],[1300,385],[1360,445],[1410,475],[1470,530],[1540,605],[1560,612]]),'#d800d8',1.8);
line(g,z8([[200,1472],[220,1472],[260,1440],[310,1360],[380,1290],[460,1235],[520,1180],[590,1128],[660,1040],[720,985],[790,895],[840,840],[920,785],[960,768],[1030,760],[1100,722],[1180,703],[1240,630]]),'#d800d8',1.5);
line(g,z7([[10,417],[40,415],[80,422],[160,415],[220,410],[300,368],[360,352],[420,335],[500,322],[560,282],[640,240],[720,215],[790,200],[850,163],[930,167],[970,205],[1050,285],[1100,330],[1130,350],[1170,378],[1210,380],[1260,410],[1300,450],[1390,550],[1440,608]]),'#e6e600',1.8);
line(g,z8([[205,1470],[240,1400],[310,1150],[350,1060],[420,940],[480,850],[520,832],[590,855],[630,895],[700,938],[760,915],[830,855],[900,770],[965,650],[1060,545],[1105,525],[1175,553],[1240,483]]),'#d8d800',1.5);
line(g,z7([[10,418],[70,462],[90,460],[170,368],[230,405],[270,385],[330,310],[380,305],[420,345],[450,362],[490,345],[520,260],[560,205],[590,185],[620,230],[655,252],[695,245],[760,160],[850,150],[930,180],[960,240],[1010,315],[1050,355],[1110,358],[1170,395],[1265,447],[1298,490],[1360,610]]),'#d8d8d8',1.5);
line(g,z8([[160,1470],[230,1180],[280,980],[310,810],[345,728],[380,718],[413,718],[450,790],[490,900],[530,955],[590,992],[625,992],[650,955],[700,930],[770,840],[795,782],[830,770],[900,650],[940,580],[1002,458],[1070,425],[1105,462],[1140,550],[1178,642],[1212,610],[1240,540]]),'#d8d8d8',1.5);
m.appendChild(m.querySelector('.axis-text'));

/* ---------- sub chart ---------- */
var s=document.getElementById('subchart');
var h=el(s,'g',{});
[829,879,928,977,1026,1075,1125,1174,1224].forEach(function(y){el(h,'path',{d:'M0 '+y+' H1639',stroke:DOT,'stroke-dasharray':'2 4'});el(h,'path',{d:'M1640 '+y+' H1650',stroke:'#b00000'})});
[854,903,952,1001,1050,1100,1149,1199,1248].forEach(function(y){el(h,'path',{d:'M1640 '+y+' H1644',stroke:'#900000'})});
el(h,'path',{d:'M5 1267 H1598',stroke:'#e0e000','stroke-width':2});
var tops={50:1118,51:1298,52:1390,53:1435,54:1187,55:1330,56:1407,57:1443,58:1200,59:1340,60:1150,77:1267,78:1372,79:1425,80:1450,81:1465,82:1470};
var bars=el(h,'g',{'shape-rendering':'crispEdges'});
Object.keys(tops).forEach(function(k){var t=780+tops[k]/3;el(bars,'rect',{x:Math.round(cx(+k)-10.5)+.5,y:t,width:21,height:1272-t,fill:'none',stroke:'#dcdc00','stroke-width':1.5})});
/* the level stretch: one block with a line per day */
var lv='M858.500 1135 H1090.500 V1272';
for(var xv=858.5;xv<1085;xv+=14.11){lv+=' M'+Math.round(xv)+'.5 1135 V1272'}
el(bars,'path',{d:lv,fill:'none',stroke:'#dcdc00','stroke-width':1.5});

line(h,z9([[12,982],[38,1092],[65,1100],[90,1078],[115,830],[140,600],[168,468],[190,458],[215,520],[245,700],[270,812],[297,735],[322,652],[345,683],[375,600],[400,510],[450,365],[475,590],[500,750],[525,900],[553,957],[580,880],[630,570],[655,490],[682,540],[735,525],[760,620],[785,820],[810,845],[835,888],[860,750],[885,530],[940,360],[963,350],[990,420],[1020,610],[1043,750],[1068,690],[1115,860],[1170,995],[1220,1035],[1270,1170],[1300,1200],[1330,1000],[1350,955],[1375,945],[1400,958],[1430,868],[1505,975],[1530,965],[1550,1040]]).concat(z10([[0,1070],[40,1190],[100,1225],[120,1210],[170,1240],[220,950],[245,988],[270,983],[300,1090],[325,1110],[350,1155],[375,1060],[405,900],[430,730],[455,620],[480,595],[505,495],[555,380],[607,272],[632,295],[660,420],[685,680],[710,900],[738,1020],[790,1030],[815,1115],[842,1155],[865,1070],[890,865],[940,918],[965,865],[990,700],[1020,575],[1045,525],[1095,478],[1120,465],[1145,515],[1170,620],[1195,780],[1225,965],[1250,1100],[1277,1140],[1300,910],[1327,645]])),'#e00000',1.6);
line(h,z9([[12,865],[38,985],[65,1040],[90,1058],[115,940],[140,760],[168,610],[190,538],[215,525],[245,630],[270,715],[297,728],[322,687],[345,687],[375,640],[400,560],[450,430],[475,515],[500,650],[530,790],[553,868],[580,860],[605,800],[630,680],[655,585],[682,560],[735,538],[760,610],[785,720],[835,838],[860,770],[885,630],[940,450],[963,403],[990,418],[1020,530],[1043,630],[1068,655],[1115,770],[1170,930],[1220,1010],[1270,1110],[1300,1162],[1330,1075],[1350,1020],[1380,980],[1400,970],[1430,920],[1455,906],[1480,918],[1505,945],[1530,958]]).concat(z10([[0,1030],[40,1120],[70,1175],[100,1205],[120,1205],[170,1230],[190,1210],[225,1050],[270,1005],[300,1050],[325,1070],[350,1115],[375,1085],[405,990],[430,870],[455,750],[480,675],[505,580],[530,505],[555,450],[605,335],[632,312],[660,365],[685,520],[710,720],[735,865],[760,945],[790,990],[815,1050],[842,1105],[865,1095],[890,975],[915,930],[940,925],[965,895],[990,790],[1020,670],[1045,600],[1095,510],[1120,493],[1145,505],[1170,570],[1195,670],[1225,850],[1250,970],[1277,1052],[1300,975],[1327,805]])),'#00d8e0',1.6);
line(h,z9([[12,933],[38,1010],[65,1040],[90,1132],[115,1020],[140,870],[168,750],[190,745],[218,800],[245,885],[270,907],[297,855],[322,785],[345,755],[375,650],[400,550],[450,240],[475,362],[500,388],[525,533],[553,565],[580,495],[605,458],[630,250],[655,175],[682,245],[735,245],[758,325],[785,520],[810,568],[835,655],[860,550],[885,425],[915,395],[945,285],[963,250],[990,240],[1020,295],[1043,370],[1068,265],[1093,355],[1120,380],[1145,445],[1195,513],[1220,680],[1250,1000],[1275,1230],[1300,1315],[1325,1140],[1350,1210],[1378,1277],[1405,1260],[1430,1210],[1480,1305],[1505,1393],[1530,1393]]).concat(z10([[0,1415],[40,1460],[65,1440],[95,1475],[120,1415],[145,1415],[175,1450],[195,1335],[225,1305],[248,1365],[272,1320],[298,1393],[322,1365],[352,1403],[378,1355],[400,1260],[425,1150],[450,1090],[478,1062],[505,800],[530,450],[555,255],[580,190],[607,42],[632,82],[660,220],[685,430],[710,570],[735,640],[760,680],[785,735],[815,825],[842,855],[865,805],[890,672],[915,690],[940,695],[965,658],[995,540],[1020,485],[1070,445],[1120,275],[1145,250],[1170,320],[1200,430],[1225,560],[1250,770],[1277,895],[1300,700],[1327,478]])),'#e0e000',1.6);

[51,63,65,68,94,111].forEach(function(i){var x=cx(i);
  el(h,'polygon',{points:(x-14.11)+',1272 '+(x-1)+',952 '+(x+1)+',952 '+(x+14.11)+',1272',fill:'none',stroke:'#ff00ff','stroke-width':5.5,'stroke-linejoin':'bevel'});
});
line(h,[[842,1273],[868,1273],[883,1173],[912,1173],[926,1273],[940,1273],[953,1173],[967,1273]],'#00f000',5);
line(h,[[5,1273],[839,1273],[845,1200],[853,1090],[857,1075],[953,1075],[960,1150],[967,1273],[1588,1273]],'#ffffff',5);
el(h,'path',{d:'M1588 1273 H1598',stroke:'#e0e000','stroke-width':2});
})();
```
